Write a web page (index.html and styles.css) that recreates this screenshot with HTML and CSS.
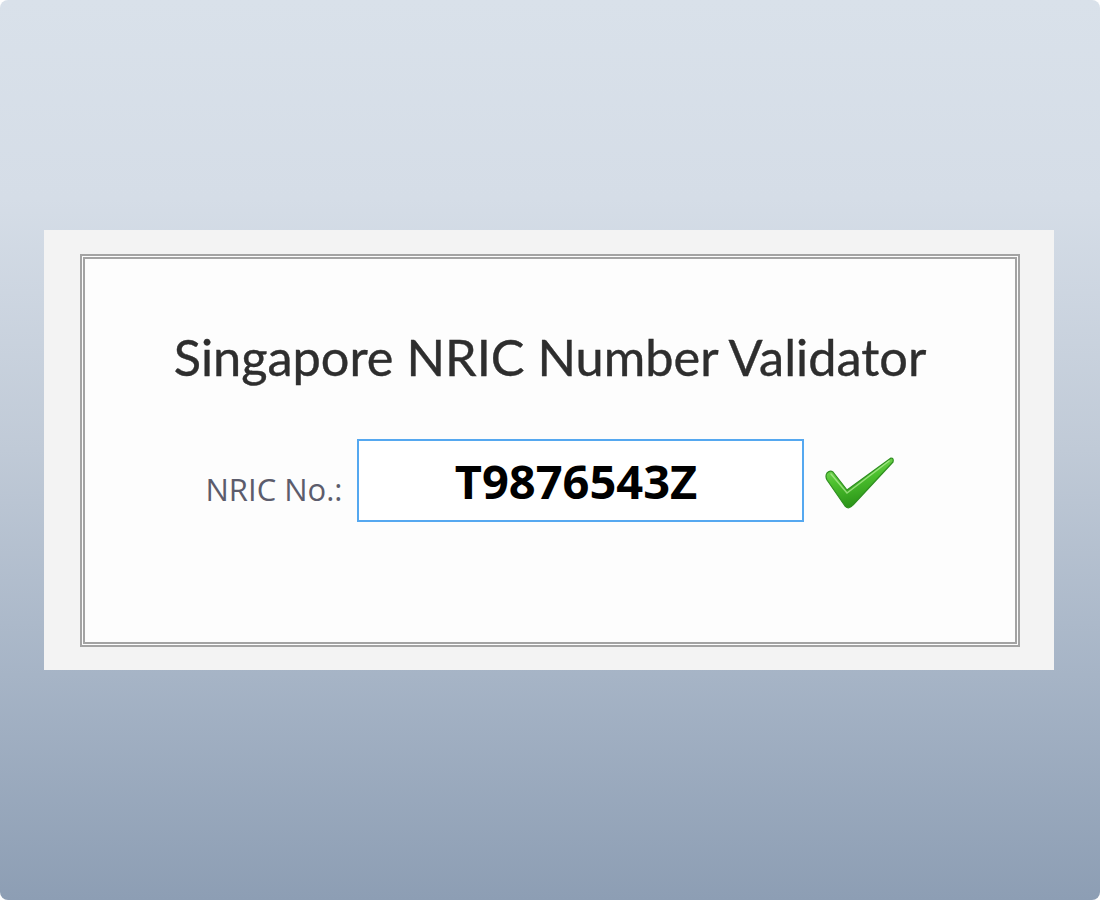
FILE: index.html
```html
<!DOCTYPE html>
<html>
<head>
<meta charset="utf-8">
<link rel="stylesheet" href="styles.css">
</head>
<body>
<div class="stage">
  <div class="panel">
    <div class="frame">
      <h1 class="title">Singapore NRIC Number Validator</h1>
      <div class="row">
        <label class="label" for="nric">NRIC No.:</label>
        <input id="nric" class="nric" type="text" value="T9876543Z" readonly>
        <svg class="check" width="72" height="56" viewBox="0 0 72 56">
          <defs>
            <linearGradient id="g" x1="0" y1="0" x2="0.3" y2="1">
              <stop offset="0" stop-color="#8fe06a"/>
              <stop offset="0.5" stop-color="#4cc02e"/>
              <stop offset="1" stop-color="#2a9418"/>
            </linearGradient>
          </defs>
          <path d="M4 18 Q7 15 10 17 L24 35 L68 3 Q71 3 70 7 L30 50 Q26 55 22 51 L4 25 Q2 21 4 18 Z" fill="url(#g)" stroke="#2f8f20" stroke-width="1.2" stroke-linejoin="round"/>
          <path d="M8 19 L24 38 L66 6" fill="none" stroke="#b6f09a" stroke-width="1.5" stroke-linecap="round" opacity="0.7"/>
        </svg>
      </div>
    </div>
  </div>
</div>
</body>
</html>
```
FILE: styles.css
```css
html, body {
  margin: 0;
  padding: 0;
  background: #ffffff;
}

.stage {
  width: 1100px;
  height: 900px;
  box-sizing: border-box;
  padding: 230px 46px 230px 44px;
  border-radius: 8px;
  background: linear-gradient(180deg, #d9e1ea 0%, #d5dde7 22%, #c0cad7 50%, #a6b4c6 75%, #8d9eb4 100%);
}

.panel {
  height: 440px;
  box-sizing: border-box;
  padding: 24px 34px 23px 36px;
  background: #f3f3f3;
}

.frame {
  height: 100%;
  box-sizing: border-box;
  border: 5px double #a3a3a3;
  background: #fdfdfd;
  padding-top: 68px;
  display: flex;
  flex-direction: column;
  align-items: center;
}

.title {
  margin: 0;
  font-family: Lato, "Open Sans", sans-serif;
  font-weight: 400;
  font-size: 50.5px;
  line-height: 60px;
  color: #2e2e2e;
  -webkit-text-stroke: 0.4px #2e2e2e;
}

.row {
  margin-top: 52px;
  display: flex;
  align-items: center;
}

.label {
  font-family: "Open Sans", sans-serif;
  font-size: 31px;
  color: #5c5c6c;
  margin-right: 14px;
  margin-top: 16px;
}

.nric {
  width: 447px;
  height: 83px;
  box-sizing: border-box;
  border: 2px solid #55a8f0;
  background: #ffffff;
  font-family: "Open Sans", sans-serif;
  font-weight: 700;
  font-size: 47px;
  color: #000000;
  text-align: center;
  padding: 0 8px 0 0;
  margin: 0;
  outline: none;
}

.check {
  margin-left: 19px;
  margin-top: 4px;
  display: block;
}
```
